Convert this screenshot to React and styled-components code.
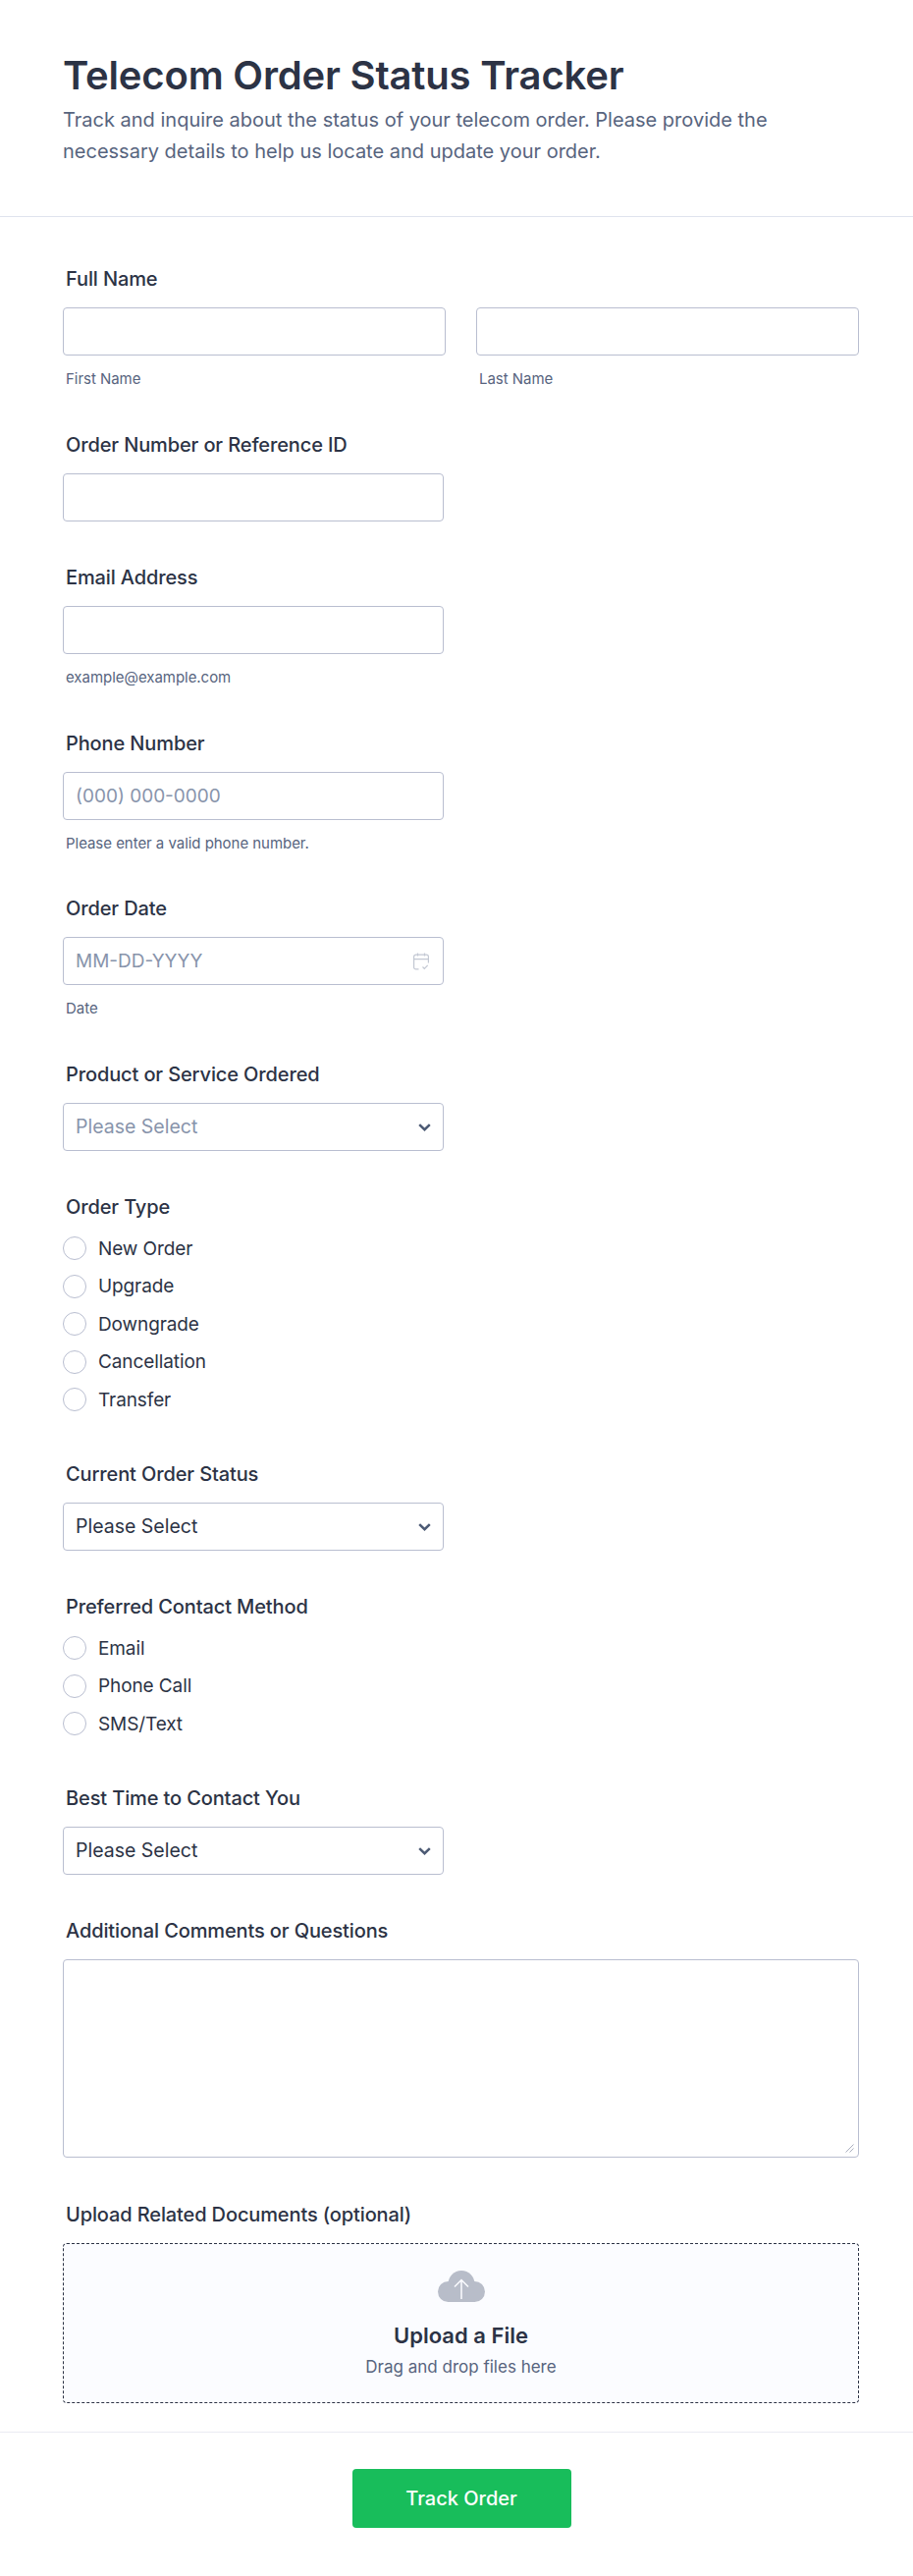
import React from 'react';
import styled, { createGlobalStyle } from 'styled-components';

const GlobalStyle = createGlobalStyle`
  * {
    box-sizing: border-box;
  }

  body {
    margin: 0;
    background: #fff;
    color: #2c3345;
    font-family: Inter, 'Noto Sans', sans-serif;
  }
`;

const Page = styled.div`
  width: 930px;
  height: 2623px;
  overflow: hidden;
`;

const Header = styled.header`
  height: 221px;
  padding: 53px 64px 0;
  border-bottom: 1px solid #dfe3ee;
`;

const Title = styled.h1`
  margin: 0;
  font-size: 40px;
  line-height: 48px;
  font-weight: 600;
  letter-spacing: -0.18px;
  color: #2c3345;
`;

const Description = styled.p`
  margin: 5px 0 0;
  width: 760px;
  font-size: 20px;
  line-height: 32px;
  color: #57647e;
`;

const Form = styled.form`
  display: flex;
  flex-direction: column;
  gap: 46.5px;
  padding: 52px 55px 0 64px;
`;

const Field = styled.div`
  display: flex;
  flex-direction: column;
  align-items: flex-start;
`;

const Label = styled.label`
  margin: 0 0 18px 3px;
  font-size: 20px;
  line-height: 22px;
  font-weight: 500;
  letter-spacing: -0.12px;
  color: #2c3345;
`;

const NameRow = styled.div`
  display: grid;
  grid-template-columns: 390px 390px;
  gap: 31px;
  width: 100%;
`;

const Column = styled.div`
  display: flex;
  flex-direction: column;
`;

const Input = styled.input`
  display: block;
  width: ${(props) => (props.$wide ? '100%' : '388px')};
  height: 49px;
  padding: 0 12px;
  border: 1px solid #b9bed0;
  border-radius: 4px;
  background: #fff;
  font-family: inherit;
  font-size: 19px;
  color: #2c3345;

  &::placeholder {
    color: #8894ab;
    opacity: 1;
  }
`;

const Hint = styled.span`
  margin: 14px 0 0 3px;
  font-size: 15px;
  line-height: 19px;
  letter-spacing: -0.04px;
  color: #57647e;
`;

const Control = styled.div`
  position: relative;
  width: 388px;
`;

const DateIcon = styled.svg`
  position: absolute;
  right: 15px;
  top: 16px;
  width: 16px;
  height: 18px;
  fill: none;
  stroke: #c3c8d3;
  stroke-width: 1.2;
`;

const Select = styled.select`
  display: block;
  width: 100%;
  height: 49px;
  padding: 0 12px;
  border: 1px solid #b9bed0;
  border-radius: 4px;
  background: #fff;
  appearance: none;
  font-family: inherit;
  font-size: 19.5px;
  color: ${(props) => (props.$muted ? '#8894ab' : '#2c3345')};
`;

const Chevron = styled.svg`
  position: absolute;
  right: 13px;
  top: 21px;
  width: 13px;
  height: 8px;
  fill: none;
  stroke: #4c5a74;
  stroke-width: 2.5;
  pointer-events: none;
`;

const RadioList = styled.div`
  display: flex;
  flex-direction: column;
  gap: 14.5px;
  margin-top: 1px;
  padding-bottom: 6px;
`;

const RadioRow = styled.label`
  display: flex;
  align-items: center;
  gap: 12px;
  height: 24px;
  font-size: 19px;
  letter-spacing: -0.1px;
  color: #2c3345;
`;

const Radio = styled.input`
  width: 24px;
  height: 24px;
  margin: 0;
  appearance: none;
  border: 1px solid #b9bed0;
  border-radius: 50%;
  background: #fff;
`;

const TextAreaWrap = styled.div`
  position: relative;
  width: 100%;
`;

const TextArea = styled.textarea`
  display: block;
  width: 100%;
  height: 202px;
  padding: 12px;
  border: 1px solid #b9bed0;
  border-radius: 4px;
  background: #fff;
  font-family: inherit;
  font-size: 19px;
  resize: none;
`;

const ResizeGrip = styled.svg`
  position: absolute;
  right: 5px;
  bottom: 5px;
  width: 9px;
  height: 9px;
  fill: none;
  stroke: #a9aebd;
  stroke-width: 1;
`;

const DropZone = styled.div`
  display: flex;
  flex-direction: column;
  align-items: center;
  width: 100%;
  height: 163px;
  padding-top: 27px;
  border: 1px dashed #2c3345;
  border-radius: 4px;
  background: #fbfcff;
`;

const CloudIcon = styled.svg`
  width: 48px;
  height: 32px;
  fill: #b8bdc9;
`;

const DropTitle = styled.div`
  margin-top: 21px;
  font-size: 22px;
  line-height: 26px;
  font-weight: 600;
  color: #2c3345;
`;

const DropText = styled.div`
  margin-top: 9px;
  font-size: 17px;
  line-height: 20px;
  color: #57647e;
`;

const Footer = styled.footer`
  display: flex;
  justify-content: center;
  margin-top: 29.5px;
  padding: 37px 0 0 10px;
  border-top: 1px solid #eaebf2;
`;

const SubmitButton = styled.button`
  width: 223px;
  height: 60px;
  border: 0;
  border-radius: 4px;
  background: #18bd5b;
  font-family: inherit;
  font-size: 20px;
  font-weight: 500;
  color: #fff;
`;

function SelectField({ label, muted }) {
  return (
    <Field>
      <Label>{label}</Label>
      <Control>
        <Select $muted={muted}>
          <option>Please Select</option>
        </Select>
        <Chevron viewBox='0 0 13 8'>
          <path d='M1.200 1.200 6.500 6.200l5.300-5' />
        </Chevron>
      </Control>
    </Field>
  );
}

function RadioField({ label, name, options }) {
  return (
    <Field>
      <Label>{label}</Label>
      <RadioList>
        {options.map((option) => (
          <RadioRow key={option}>
            <Radio type='radio' name={name} />
            {option}
          </RadioRow>
        ))}
      </RadioList>
    </Field>
  );
}

function App() {
  return (
    <Page>
      <GlobalStyle />
      <Header>
        <Title>Telecom Order Status Tracker</Title>
        <Description>
          Track and inquire about the status of your telecom order. Please provide the necessary details to help us
          locate and update your order.
        </Description>
      </Header>
      <Form>
        <Field>
          <Label>Full Name</Label>
          <NameRow>
            <Column>
              <Input $wide type='text' />
              <Hint>First Name</Hint>
            </Column>
            <Column>
              <Input $wide type='text' />
              <Hint>Last Name</Hint>
            </Column>
          </NameRow>
        </Field>
        <Field>
          <Label>Order Number or Reference ID</Label>
          <Input type='text' />
        </Field>
        <Field>
          <Label>Email Address</Label>
          <Input type='email' />
          <Hint>example@example.com</Hint>
        </Field>
        <Field>
          <Label>Phone Number</Label>
          <Input type='tel' placeholder='(000) 000-0000' />
          <Hint>Please enter a valid phone number.</Hint>
        </Field>
        <Field>
          <Label>Order Date</Label>
          <Control>
            <Input type='text' placeholder='MM-DD-YYYY' />
            <DateIcon viewBox='0 0 16 18'>
              <path d='M5.500 16.900H2.600A2 2 0 0 1 .6 14.900V4.200a2 2 0 0 1 2-2h10.800a2 2 0 0 1 2 2v6.300' />
              <path d='M.6 6.700h14.800M4.500.5v3M11.500.5v3M9.500 14.500l1.800 1.800 3.400-3.400' />
            </DateIcon>
          </Control>
          <Hint>Date</Hint>
        </Field>
        <SelectField label='Product or Service Ordered' muted />
        <RadioField
          label='Order Type'
          name='orderType'
          options={['New Order', 'Upgrade', 'Downgrade', 'Cancellation', 'Transfer']}
        />
        <SelectField label='Current Order Status' />
        <RadioField label='Preferred Contact Method' name='contact' options={['Email', 'Phone Call', 'SMS/Text']} />
        <SelectField label='Best Time to Contact You' />
        <Field>
          <Label>Additional Comments or Questions</Label>
          <TextAreaWrap>
            <TextArea />
            <ResizeGrip viewBox='0 0 9 9'>
              <path d='M.5 8.500l8-8M4.500 8.500l4-4' />
            </ResizeGrip>
          </TextAreaWrap>
        </Field>
        <Field>
          <Label>Upload Related Documents (optional)</Label>
          <DropZone>
            <CloudIcon viewBox='0 0 48 32'>
              <circle cx='24' cy='13.500' r='13.500' />
              <circle cx='10.500' cy='21.500' r='10.500' />
              <circle cx='37.500' cy='21.500' r='10.500' />
              <rect x='10' y='20' width='28' height='12' />
              <path d='M24 29V9.500M17 16.500l7-7 7 7' fill='none' stroke='#fbfcff' strokeWidth='1.500' />
            </CloudIcon>
            <DropTitle>Upload a File</DropTitle>
            <DropText>Drag and drop files here</DropText>
          </DropZone>
        </Field>
      </Form>
      <Footer>
        <SubmitButton type='button'>Track Order</SubmitButton>
      </Footer>
    </Page>
  );
}

export default App;
